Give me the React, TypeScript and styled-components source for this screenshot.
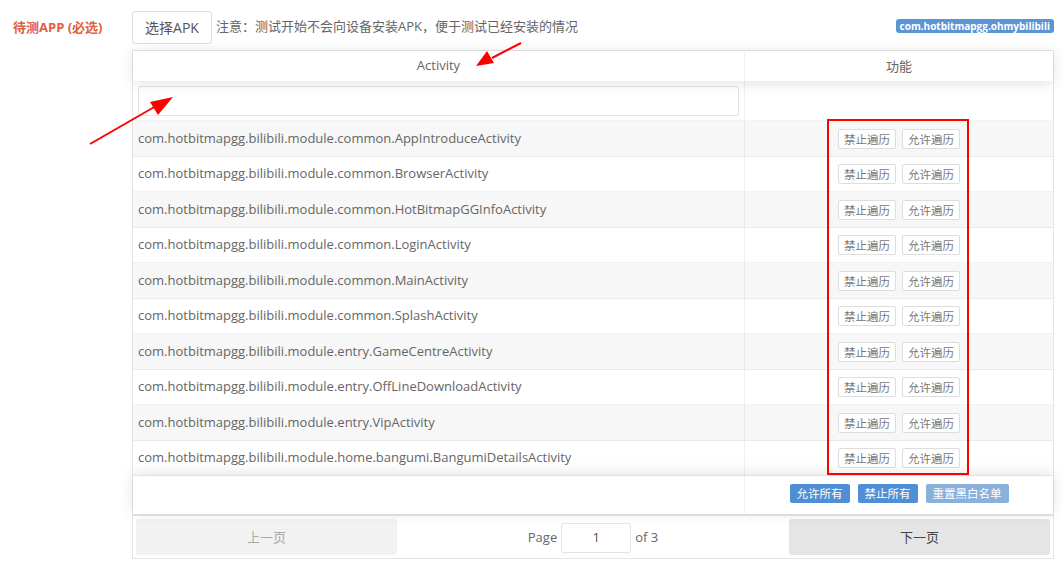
import React from "react";
import styled, { createGlobalStyle } from "styled-components";

const activities = [
  "com.hotbitmapgg.bilibili.module.common.AppIntroduceActivity",
  "com.hotbitmapgg.bilibili.module.common.BrowserActivity",
  "com.hotbitmapgg.bilibili.module.common.HotBitmapGGInfoActivity",
  "com.hotbitmapgg.bilibili.module.common.LoginActivity",
  "com.hotbitmapgg.bilibili.module.common.MainActivity",
  "com.hotbitmapgg.bilibili.module.common.SplashActivity",
  "com.hotbitmapgg.bilibili.module.entry.GameCentreActivity",
  "com.hotbitmapgg.bilibili.module.entry.OffLineDownloadActivity",
  "com.hotbitmapgg.bilibili.module.entry.VipActivity",
  "com.hotbitmapgg.bilibili.module.home.bangumi.BangumiDetailsActivity",
];

const GlobalStyle = createGlobalStyle`
  body {
    margin: 0;
    background: #fff;
    font-family: "Open Sans", "Noto Sans CJK SC", sans-serif;
    color: #555;
  }
`;

const Page = styled.div`
  position: relative;
  width: 1063px;
  height: 566px;
  display: grid;
  grid-template-columns: 132px 922px;
  overflow: hidden;
`;

const Label = styled.div`
  padding: 17px 0 0 13px;
  font-size: 13px;
  font-weight: 700;
  color: #e0603e;
`;

const Main = styled.div`
  padding-top: 11px;
  display: flex;
  flex-direction: column;
`;

const TopBar = styled.div`
  display: flex;
  align-items: center;
  height: 33px;
  margin-bottom: 6px;
`;

const PickButton = styled.button`
  width: 80px;
  height: 33px;
  border: 1px solid #ddd;
  border-radius: 3px;
  background: #fff;
  font-family: inherit;
  font-size: 14px;
  color: #555;
  padding: 0 0 2px;
`;

const Note = styled.span`
  margin-left: 4px;
  font-size: 13px;
  color: #666;
  margin-top: -5px;
`;

const Badge = styled.span`
  margin-left: auto;
  margin-top: -3px;
  background: #5b95d3;
  color: #fff;
  font-size: 10px;
  font-weight: 700;
  padding: 0 4px;
  height: 14px;
  line-height: 14px;
  border-radius: 3px;
`;

const Table = styled.div`
  border: 1px solid rgba(0, 0, 0, 0.1);
  display: flex;
  flex-direction: column;
`;

const Row = styled.div<{ $alt?: boolean; $h: number }>`
  display: grid;
  grid-template-columns: 612px 1fr;
  height: ${(p) => p.$h}px;
  background: ${(p) => (p.$alt ? "#f7f7f7" : "#fff")};
  border-bottom: 1px solid rgba(0, 0, 0, 0.05);
  box-sizing: border-box;
`;

const HeadRow = styled(Row)`
  box-shadow: 0 2px 15px rgba(0, 0, 0, 0.12);
  position: relative;
  z-index: 1;
  border-bottom: none;
`;

const FootRow = styled(Row)`
  box-shadow: 0 -2px 15px rgba(0, 0, 0, 0.12);
  position: relative;
  z-index: 1;
  border-bottom: none;
`;

const Cell = styled.div<{ $center?: boolean }>`
  display: flex;
  align-items: center;
  justify-content: ${(p) => (p.$center ? "center" : "flex-start")};
  padding: 0 5px 2px;
  font-size: 13px;
  color: #666;
  white-space: nowrap;
  overflow: hidden;
  &:first-child {
    border-right: 1px solid rgba(0, 0, 0, 0.05);
  }
`;

const FilterInput = styled.input`
  width: 100%;
  height: 30px;
  box-sizing: border-box;
  border: 1px solid rgba(0, 0, 0, 0.1);
  border-radius: 3px;
  background: #fff;
  outline: none;
  margin-top: 2px;
`;

const Actions = styled.div`
  display: flex;
  gap: 6px;
  margin-top: 2px;
`;

const SmallButton = styled.button`
  width: 58px;
  height: 20px;
  padding: 0;
  border: 1px solid #ddd;
  border-radius: 2px;
  background: #fff;
  color: #777;
  font-family: inherit;
  font-size: 11.5px;
`;

const BlueButton = styled.button<{ $faded?: boolean }>`
  height: 19px;
  padding: 0 7px;
  border: none;
  border-radius: 2px;
  background: ${(p) => (p.$faded ? "#8ab0dc" : "#4f8fd6")};
  color: #fff;
  font-family: inherit;
  font-size: 11.5px;
`;

const FootActions = styled.div`
  display: flex;
  gap: 8px;
  margin-top: -2px;
`;

const Pager = styled.div`
  display: flex;
  align-items: center;
  justify-content: space-between;
  padding: 3px;
  height: 44px;
  box-sizing: border-box;
  border-top: 2px solid rgba(0, 0, 0, 0.1);
`;

const PagerButton = styled.button<{ $disabled?: boolean }>`
  width: 261px;
  height: 36px;
  border: none;
  border-radius: 3px;
  background: ${(p) => (p.$disabled ? "#f2f2f2" : "#e5e5e5")};
  color: ${(p) => (p.$disabled ? "#aaa" : "#444")};
  font-family: inherit;
  font-size: 13px;
  padding: 0 0 2px;
`;

const PageInfo = styled.div`
  display: flex;
  align-items: center;
  gap: 4px;
  font-size: 13px;
  color: #666;
`;

const PageInput = styled.input`
  width: 70px;
  height: 30px;
  box-sizing: border-box;
  border: 1px solid rgba(0, 0, 0, 0.1);
  border-radius: 3px;
  text-align: center;
  font-family: inherit;
  font-size: 13px;
  color: #555;
  padding: 0 0 2px;
  margin-top: 1px;
`;

const RedBox = styled.div`
  position: absolute;
  left: 827px;
  top: 119px;
  width: 142px;
  height: 356px;
  box-sizing: border-box;
  border: 2px solid #f00;
  pointer-events: none;
  z-index: 5;
`;

const ArrowLayer = styled.svg`
  position: absolute;
  left: 0;
  top: 0;
  pointer-events: none;
  z-index: 5;
`;

export default function App() {
  return (
    <>
      <GlobalStyle />
      <Page>
        <Label>待测APP (必选)</Label>
        <Main>
          <TopBar>
            <PickButton>选择APK</PickButton>
            <Note>注意：测试开始不会向设备安装APK，便于测试已经安装的情况</Note>
            <Badge>com.hotbitmapgg.ohmybilibili</Badge>
          </TopBar>
          <Table>
            <HeadRow $h={30}>
              <Cell $center>Activity</Cell>
              <Cell $center>功能</Cell>
            </HeadRow>
            <Row $h={40}>
              <Cell>
                <FilterInput />
              </Cell>
              <Cell />
            </Row>
            {activities.map((a, i) => (
              <Row key={a} $alt={i % 2 === 0} $h={i % 2 === 0 ? 36 : 35}>
                <Cell>{a}</Cell>
                <Cell $center>
                  <Actions>
                    <SmallButton>禁止遍历</SmallButton>
                    <SmallButton>允许遍历</SmallButton>
                  </Actions>
                </Cell>
              </Row>
            ))}
            <FootRow $h={38}>
              <Cell />
              <Cell $center>
                <FootActions>
                  <BlueButton>允许所有</BlueButton>
                  <BlueButton>禁止所有</BlueButton>
                  <BlueButton $faded>重置黑白名单</BlueButton>
                </FootActions>
              </Cell>
            </FootRow>
            <Pager>
              <PagerButton $disabled>上一页</PagerButton>
              <PageInfo>
                Page <PageInput defaultValue="1" /> of 3
              </PageInfo>
              <PagerButton>下一页</PagerButton>
            </Pager>
          </Table>
        </Main>
        <RedBox />
        <ArrowLayer width="1063" height="566" viewBox="0 0 1063 566">
          <line x1="90" y1="144" x2="156" y2="106" stroke="#f00" strokeWidth="2" />
          <polygon points="173,97 150,102 158,115" fill="#f00" />
          <line x1="521" y1="43" x2="492" y2="58" stroke="#f00" strokeWidth="2" />
          <polygon points="476,66 487,51 494,63" fill="#f00" />
        </ArrowLayer>
      </Page>
    </>
  );
}
